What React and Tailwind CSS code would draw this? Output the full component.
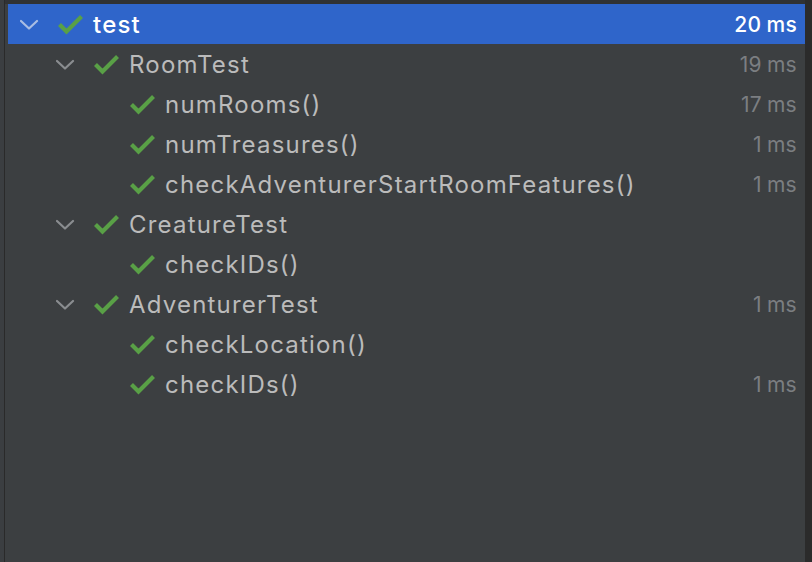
const rows = [
  { level: 0, name: "test", time: "20", open: true, selected: true },
  { level: 1, name: "RoomTest", time: "19", open: true },
  { level: 2, name: "numRooms()", time: "17" },
  { level: 2, name: "numTreasures()", time: "1" },
  { level: 2, name: "checkAdventurerStartRoomFeatures()", time: "1" },
  { level: 1, name: "CreatureTest", open: true },
  { level: 2, name: "checkIDs()" },
  { level: 1, name: "AdventurerTest", time: "1", open: true },
  { level: 2, name: "checkLocation()" },
  { level: 2, name: "checkIDs()", time: "1" },
];

const Chevron = ({ selected }) => (
  <svg width="38" height="18" viewBox="0 0 38 18" className="shrink-0">
    <path
      d="M1 5 L9 12.5 L17 5"
      fill="none"
      stroke={selected ? "#a9bde3" : "#8a8d90"}
      strokeWidth="2.2"
      strokeLinecap="round"
      strokeLinejoin="round"
    />
  </svg>
);

const Check = () => (
  <svg width="25" height="20" viewBox="0 0 25 20" className="shrink-0">
    <path
      d="M1.5 9.5 L8.5 16.5 L23.5 1.5"
      fill="none"
      stroke="#59a046"
      strokeWidth="4.2"
      strokeLinejoin="miter"
    />
  </svg>
);

// padding so the first glyph sits where the reference puts it (row starts at x=8)
const indents = ["pl-[12px]", "pl-[48px]", "pl-[122px]"];

export default function App() {
  return (
    <div
      className="w-[812px] h-[562px] bg-[#2b2b2b] flex overflow-hidden"
      style={{ fontFamily: "Inter, 'Noto Sans', sans-serif" }}
    >
      <div className="w-[4px] bg-[#3b3e41]" />
      <div className="w-[1px] bg-[#2a2a2a]" />
      <div className="flex-1 bg-[#3c3f41] flex flex-col">
        <div className="h-[4px] bg-[#303234]" />
        {rows.map((r, i) => (
          <div
            key={i}
            className={`h-[40px] pt-[2px] ml-[3px] flex items-center pr-[8px] ${indents[r.level]} ${
              r.selected ? "bg-[#2f65ca]" : ""
            }`}
          >
            {r.level < 2 && <Chevron selected={r.selected} />}
            <Check />
            <span
              className={`ml-[10px] text-[24px] tracking-[1.2px] ${
                r.selected ? "text-white font-medium" : "text-[#bbbbbb]"
              }`}
            >
              {r.name}
            </span>
            <span className="flex-1" />
            {r.time && (
              <span
                className={`text-[21px] tracking-[0.3px] ${
                  r.selected ? "text-white font-medium" : "text-[#7b7e81]"
                }`}
              >
                {r.time}
                <span className="ml-[5px]">ms</span>
              </span>
            )}
          </div>
        ))}
      </div>
      <div className="w-[7px] bg-[#2b2b2b]" />
    </div>
  );
}
